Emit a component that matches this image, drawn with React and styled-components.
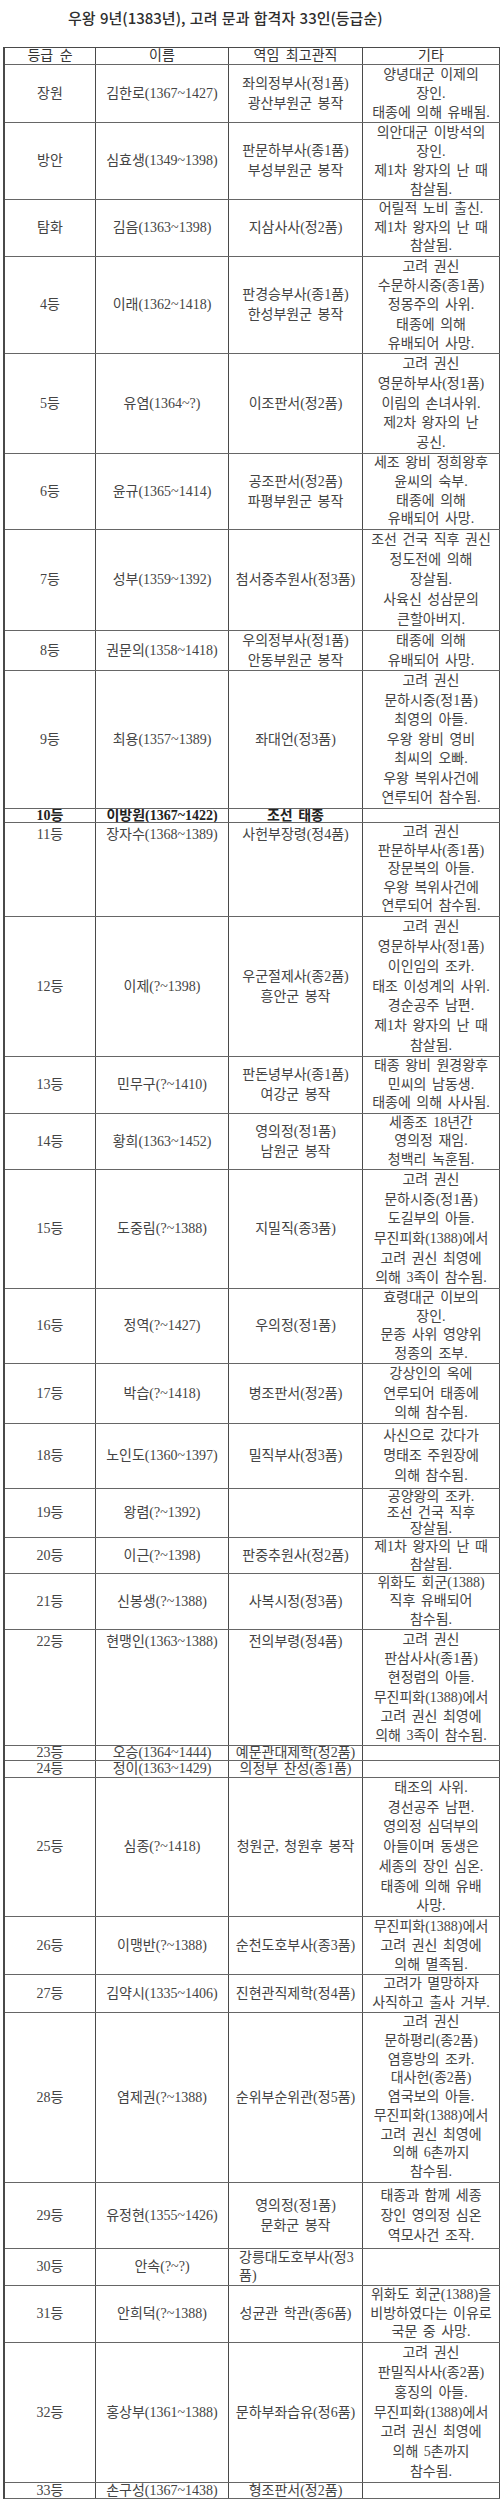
import React from "react";
import styled, { createGlobalStyle } from "styled-components";

const GlobalStyle = createGlobalStyle`
  body {
    margin: 0;
    background: #ffffff;
    font-family: "Liberation Serif", "Noto Sans CJK KR", serif;
    color: #3a3a3a;
  }
`;

const rows = [
  { rank: "장원", name: "김한로(1367~1427)", role: ["좌의정부사(정1품)", "광산부원군 봉작"], note: ["양녕대군 이제의", "장인.", "태종에 의해 유배됨."], h: 58 },
  { rank: "방안", name: "심효생(1349~1398)", role: ["판문하부사(종1품)", "부성부원군 봉작"], note: ["의안대군 이방석의", "장인.", "제1차 왕자의 난 때", "참살됨."], h: 77 },
  { rank: "탐화", name: "김음(1363~1398)", role: ["지삼사사(정2품)"], note: ["어릴적 노비 출신.", "제1차 왕자의 난 때", "참살됨."], h: 57 },
  { rank: "4등", name: "이래(1362~1418)", role: ["판경승부사(종1품)", "한성부원군 봉작"], note: ["고려 권신", "수문하시중(종1품)", "정몽주의 사위.", "태종에 의해", "유배되어 사망."], h: 97 },
  { rank: "5등", name: "유염(1364~?)", role: ["이조판서(정2품)"], note: ["고려 권신", "영문하부사(정1품)", "이림의 손녀사위.", "제2차 왕자의 난", "공신."], h: 100 },
  { rank: "6등", name: "윤규(1365~1414)", role: ["공조판서(정2품)", "파평부원군 봉작"], note: ["세조 왕비 정희왕후", "윤씨의 숙부.", "태종에 의해", "유배되어 사망."], h: 76 },
  { rank: "7등", name: "성부(1359~1392)", role: ["첨서중추원사(정3품)"], note: ["조선 건국 직후 권신", "정도전에 의해", "장살됨.", "사육신 성삼문의", "큰할아버지."], h: 101 },
  { rank: "8등", name: "권문의(1358~1418)", role: ["우의정부사(정1품)", "안동부원군 봉작"], note: ["태종에 의해", "유배되어 사망."], h: 40 },
  { rank: "9등", name: "최용(1357~1389)", role: ["좌대언(정3품)"], note: ["고려 권신", "문하시중(정1품)", "최영의 아들.", "우왕 왕비 영비", "최씨의 오빠.", "우왕 복위사건에", "연루되어 참수됨."], h: 138 },
  { rank: "10등", name: "이방원(1367~1422)", role: ["조선 태종"], note: [], h: 14, bold: true },
  { rank: "11등", name: "장자수(1368~1389)", role: ["사헌부장령(정4품)"], note: ["고려 권신", "판문하부사(종1품)", "장문복의 아들.", "우왕 복위사건에", "연루되어 참수됨."], h: 94, top: true },
  { rank: "12등", name: "이제(?~1398)", role: ["우군절제사(종2품)", "흥안군 봉작"], note: ["고려 권신", "영문하부사(정1품)", "이인임의 조카.", "태조 이성계의 사위.", "경순공주 남편.", "제1차 왕자의 난 때", "참살됨."], h: 140 },
  { rank: "13등", name: "민무구(?~1410)", role: ["판돈녕부사(종1품)", "여강군 봉작"], note: ["태종 왕비 원경왕후", "민씨의 남동생.", "태종에 의해 사사됨."], h: 57 },
  { rank: "14등", name: "황희(1363~1452)", role: ["영의정(정1품)", "남원군 봉작"], note: ["세종조 18년간", "영의정 재임.", "청백리 녹훈됨."], h: 56 },
  { rank: "15등", name: "도중림(?~1388)", role: ["지밀직(종3품)"], note: ["고려 권신", "문하시중(정1품)", "도길부의 아들.", "무진피화(1388)에서", "고려 권신 최영에", "의해 3족이 참수됨."], h: 119 },
  { rank: "16등", name: "정역(?~1427)", role: ["우의정(정1품)"], note: ["효령대군 이보의", "장인.", "문종 사위 영양위", "정종의 조부."], h: 75 },
  { rank: "17등", name: "박습(?~1418)", role: ["병조판서(정2품)"], note: ["강상인의 옥에", "연루되어 태종에", "의해 참수됨."], h: 60 },
  { rank: "18등", name: "노인도(1360~1397)", role: ["밀직부사(정3품)"], note: ["사신으로 갔다가", "명태조 주원장에", "의해 참수됨."], h: 65 },
  { rank: "19등", name: "왕렴(?~1392)", role: [], note: ["공양왕의 조카.", "조선 건국 직후", "장살됨."], h: 49 },
  { rank: "20등", name: "이근(?~1398)", role: ["판중추원사(정2품)"], note: ["제1차 왕자의 난 때", "참살됨."], h: 36 },
  { rank: "21등", name: "신봉생(?~1388)", role: ["사복시정(정3품)"], note: ["위화도 회군(1388)", "직후 유배되어", "참수됨."], h: 56 },
  { rank: "22등", name: "현맹인(1363~1388)", role: ["전의부령(정4품)"], note: ["고려 권신", "판삼사사(종1품)", "현정렴의 아들.", "무진피화(1388)에서", "고려 권신 최영에", "의해 3족이 참수됨."], h: 116, top: true },
  { rank: "23등", name: "오승(1364~1444)", role: ["예문관대제학(정2품)"], note: [], h: 15 },
  { rank: "24등", name: "정이(1363~1429)", role: ["의정부 찬성(종1품)"], note: [], h: 17 },
  { rank: "25등", name: "심종(?~1418)", role: ["청원군, 청원후 봉작"], note: ["태조의 사위.", "경선공주 남편.", "영의정 심덕부의", "아들이며 동생은", "세종의 장인 심온.", "태종에 의해 유배", "사망."], h: 139 },
  { rank: "26등", name: "이맹반(?~1388)", role: ["순천도호부사(종3품)"], note: ["무진피화(1388)에서", "고려 권신 최영에", "의해 멸족됨."], h: 58 },
  { rank: "27등", name: "김약시(1335~1406)", role: ["진현관직제학(정4품)"], note: ["고려가 멸망하자", "사직하고 출사 거부."], h: 38 },
  { rank: "28등", name: "염제권(?~1388)", role: ["순위부순위관(정5품)"], note: ["고려 권신", "문하평리(종2품)", "염흥방의 조카.", "대사헌(종2품)", "염국보의 아들.", "무진피화(1388)에서", "고려 권신 최영에", "의해 6촌까지", "참수됨."], h: 170 },
  { rank: "29등", name: "유정현(1355~1426)", role: ["영의정(정1품)", "문화군 봉작"], note: ["태종과 함께 세종", "장인 영의정 심온", "역모사건 조작."], h: 66 },
  { rank: "30등", name: "안속(?~?)", role: ["강릉대도호부사(정3", "품)"], note: [], h: 37, wrapRole: true },
  { rank: "31등", name: "안희덕(?~1388)", role: ["성균관 학관(종6품)"], note: ["위화도 회군(1388)을", "비방하였다는 이유로", "국문 중 사망."], h: 57 },
  { rank: "32등", name: "홍상부(1361~1388)", role: ["문하부좌습유(정6품)"], note: ["고려 권신", "판밀직사사(종2품)", "홍징의 아들.", "무진피화(1388)에서", "고려 권신 최영에", "의해 5촌까지", "참수됨."], h: 140 },
  { rank: "33등", name: "손구성(1367~1438)", role: ["형조판서(정2품)"], note: [], h: 16 },
];

const Page = styled.div`
  width: 500px;
  padding-bottom: 2px;
`;

const Title = styled.h1`
  margin: 0;
  height: 47px;
  box-sizing: border-box;
  padding: 8px 0 0 68px;
  font-family: "Noto Sans CJK KR", sans-serif;
  font-size: 15px;
  font-weight: 500;
  line-height: 20px;
  color: #2e2e2e;
  word-spacing: 1px;
`;

const Table = styled.div`
  margin-left: 3px;
  width: 497px;
  border-top: 1px solid #4a4a4a;
  border-left: 2px solid #4a4a4a;
  box-sizing: border-box;
`;

const Row = styled.div`
  display: grid;
  grid-template-columns: 91px 133px 134px 137px;
  height: ${(p) => p.$h}px;
  box-sizing: border-box;
  border-bottom: 1px solid #666;
  overflow: hidden;
`;

const Cell = styled.div`
  display: flex;
  flex-direction: column;
  justify-content: ${(p) => (p.$top ? "flex-start" : "center")};
  align-items: ${(p) => (p.$left ? "flex-start" : "center")};
  padding-left: ${(p) => (p.$left ? "10px" : "0")};
  padding-top: ${(p) => (p.$top ? "2px" : "0")};
  border-right: 1px solid #4a4a4a;
  font-size: 14px;
  line-height: ${(p) => p.$lh}px;
  font-weight: ${(p) => (p.$bold ? 700 : 400)};
  color: ${(p) => (p.$bold ? "#222" : "#444")};
  white-space: nowrap;
  overflow: hidden;
  word-spacing: 2px;
`;

const HeadCell = styled(Cell)`
  color: #333;
  word-spacing: 3px;
`;

function Lines({ items }) {
  return items.map((t, i) => <span key={i}>{t}</span>);
}

function TableRow({ r }) {
  const inner = r.h - 1;
  const noteLh = r.note.length ? Math.min(20, inner / r.note.length) : 14;
  const roleLh = r.role.length ? Math.min(20, inner / r.role.length) : 14;
  const oneLh = Math.min(20, inner);
  return (
    <Row $h={r.h}>
      <Cell $lh={oneLh} $bold={r.bold} $top={r.top}>
        {r.rank}
      </Cell>
      <Cell $lh={oneLh} $bold={r.bold} $top={r.top}>
        {r.name}
      </Cell>
      <Cell $lh={roleLh} $bold={r.bold} $top={r.top} $left={r.wrapRole}>
        <Lines items={r.role} />
      </Cell>
      <Cell $lh={noteLh}>
        <Lines items={r.note} />
      </Cell>
    </Row>
  );
}

export default function App() {
  return (
    <Page>
      <GlobalStyle />
      <Title>우왕 9년(1383년), 고려 문과 합격자 33인(등급순)</Title>
      <Table>
        <Row $h={17}>
          <HeadCell $lh={16}>등급 순</HeadCell>
          <HeadCell $lh={16}>이름</HeadCell>
          <HeadCell $lh={16}>역임 최고관직</HeadCell>
          <HeadCell $lh={16}>기타</HeadCell>
        </Row>
        {rows.map((r) => (
          <TableRow key={r.rank} r={r} />
        ))}
      </Table>
    </Page>
  );
}
